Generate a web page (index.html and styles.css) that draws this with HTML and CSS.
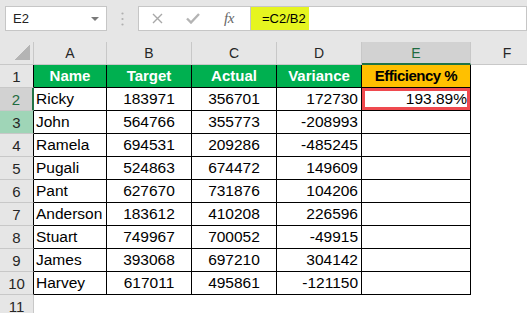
FILE: index.html
```html
<!DOCTYPE html>
<html lang="en">
<head>
  <meta charset="UTF-8" />
  <title>Efficiency %</title>
  <link rel="stylesheet" href="styles.css">
</head>
<body>
  <div class="toolbar">
    <div class="namebox">
      <span>E2</span>
      <span class="caret"></span>
    </div>
    <div class="dots">
      <svg width="3" height="14" viewBox="0 0 3 14"><circle cx="1.5" cy="1.5" r="1.1"/><circle cx="1.5" cy="7" r="1.1"/><circle cx="1.5" cy="12.5" r="1.1"/></svg>
    </div>
    <div class="fbtns">
      <span class="slot">
        <svg width="11" height="11" viewBox="0 0 11 11"><path d="M1 1 L10 10 M10 1 L1 10" class="cancel"/></svg>
      </span>
      <span class="slot">
        <svg width="14" height="11" viewBox="0 0 14 11"><path d="M1 5.5 L5 9.5 L13 1" class="enter"/></svg>
      </span>
      <span class="slot fx">fx</span>
    </div>
    <div class="formula">
      <span class="hl">=C2/B2</span>
    </div>
  </div>

  <table class="sheet">
    <colgroup>
      <col class="c-head">
      <col class="c-a">
      <col class="c-num">
      <col class="c-num">
      <col class="c-num">
      <col class="c-e">
      <col class="c-f">
    </colgroup>
    <tr class="cols">
      <th class="corner"></th>
      <th>A</th><th>B</th><th>C</th><th>D</th><th class="sel">E</th><th class="last">F</th>
    </tr>
    <tr class="titles">
      <th class="rh">1</th>
      <td class="t-green">Name</td>
      <td class="t-green">Target</td>
      <td class="t-green">Actual</td>
      <td class="t-green">Variance</td>
      <td class="t-yellow">Efficiency %</td>
      <td class="blank"></td>
    </tr>
    <tr>
      <th class="rh rh-sel">2</th>
      <td class="name">Ricky</td><td class="mid">183971</td><td class="mid">356701</td><td class="right">172730</td><td class="right active">193.89%</td><td class="blank"></td>
    </tr>
    <tr>
      <th class="rh rh-hi">3</th>
      <td class="name">John</td><td class="mid">564766</td><td class="mid">355773</td><td class="right">-208993</td><td></td><td class="blank"></td>
    </tr>
    <tr>
      <th class="rh">4</th>
      <td class="name">Ramela</td><td class="mid">694531</td><td class="mid">209286</td><td class="right">-485245</td><td></td><td class="blank"></td>
    </tr>
    <tr>
      <th class="rh">5</th>
      <td class="name">Pugali</td><td class="mid">524863</td><td class="mid">674472</td><td class="right">149609</td><td></td><td class="blank"></td>
    </tr>
    <tr>
      <th class="rh">6</th>
      <td class="name">Pant</td><td class="mid">627670</td><td class="mid">731876</td><td class="right">104206</td><td></td><td class="blank"></td>
    </tr>
    <tr>
      <th class="rh">7</th>
      <td class="name">Anderson</td><td class="mid">183612</td><td class="mid">410208</td><td class="right">226596</td><td></td><td class="blank"></td>
    </tr>
    <tr>
      <th class="rh">8</th>
      <td class="name">Stuart</td><td class="mid">749967</td><td class="mid">700052</td><td class="right">-49915</td><td></td><td class="blank"></td>
    </tr>
    <tr>
      <th class="rh">9</th>
      <td class="name">James</td><td class="mid">393068</td><td class="mid">697210</td><td class="right">304142</td><td></td><td class="blank"></td>
    </tr>
    <tr>
      <th class="rh">10</th>
      <td class="name">Harvey</td><td class="mid">617011</td><td class="mid">495861</td><td class="right">-121150</td><td></td><td class="blank"></td>
    </tr>
    <tr class="empty">
      <th class="rh rh-out">11</th>
      <td></td><td></td><td></td><td></td><td></td><td></td>
    </tr>
  </table>
</body>
</html>
```

FILE: styles.css
```css
body {
  margin: 0;
  background: #fff;
  color: #000;
  font-family: "Liberation Sans", Arial, sans-serif;
  font-size: 15.5px;
  overflow: hidden;
}

/* name box + formula bar */
.toolbar {
  display: flex;
  align-items: flex-start;
  height: 42px;
  box-sizing: border-box;
  padding: 6px 0 0 5px;
  background: #e6e6e6;
}

.namebox {
  width: 102px;
  height: 25px;
  box-sizing: border-box;
  border: 1px solid #c6c6c6;
  background: #fff;
  display: flex;
  align-items: center;
  justify-content: space-between;
  padding: 0 7px 0 7px;
  font-size: 13px;
  color: #222;
}

.caret {
  width: 0;
  height: 0;
  border-left: 4px solid transparent;
  border-right: 4px solid transparent;
  border-top: 4px solid #7a7a7a;
}

.dots {
  width: 31px;
  height: 25px;
  display: flex;
  align-items: center;
  justify-content: center;
}

.dots svg { fill: #b0b0b0; }

.fbtns {
  width: 113px;
  height: 25px;
  box-sizing: border-box;
  border: 1px solid #c6c6c6;
  background: #fff;
  display: flex;
  align-items: center;
}

.slot {
  width: 36px;
  display: flex;
  align-items: center;
  justify-content: center;
}

.cancel {
  stroke: #a8a8a8;
  stroke-width: 1.4;
  fill: none;
}

.enter {
  stroke: #b4b4b4;
  stroke-width: 2.4;
  fill: none;
}

.fx {
  font-family: "Liberation Serif", serif;
  font-style: italic;
  font-size: 15px;
  color: #666;
  letter-spacing: -0.5px;
}

.formula {
  flex: 1;
  height: 25px;
  box-sizing: border-box;
  border: 1px solid #c6c6c6;
  border-left: none;
  background: #fff;
  display: flex;
}

.hl {
  background: #e6f520;
  width: 58px;
  box-sizing: border-box;
  padding-left: 11px;
  font-size: 13px;
  line-height: 23px;
}

/* grid */
.sheet {
  table-layout: fixed;
  width: 543px;
  border-collapse: separate;
  border-spacing: 0;
}

.c-head { width: 34px; }
.c-a { width: 73px; }
.c-num { width: 85px; }
.c-e { width: 109px; }
.c-f { width: 72px; }

.sheet th,
.sheet td {
  padding: 0;
  box-sizing: border-box;
  white-space: nowrap;
  overflow: hidden;
}

.cols { height: 22px; }

.cols th {
  background: #e6e6e6;
  font-weight: normal;
  font-size: 14px;
  color: #262626;
  border-right: 1px solid #c8c8c8;
  border-bottom: 1px solid #c8c8c8;
}

.cols th.last { border-right: none; }

.cols th.sel {
  background: #d2d2d2;
  color: #1e6b40;
  border-bottom: 2px solid #217346;
}

.corner {
  background: linear-gradient(to bottom right, transparent 50%, #b4b4b4 50%) no-repeat right 3px bottom 4px / 15px 15px, #e6e6e6 !important;
}

.sheet tr { height: 23px; }

.rh {
  background: #e6e6e6;
  font-weight: normal;
  font-size: 15px;
  color: #262626;
  text-align: center;
  border-right: 1px solid #000;
  border-bottom: 1px solid #c8c8c8;
}

.rh-sel {
  background: #d2d2d2;
  color: #1e6b40;
  border-right: 2px solid #217346;
}

.rh-hi { background: #9fd5b7; }

.rh-out { border-right: 1px solid #c8c8c8; }

.sheet td {
  border-right: 1px solid #000;
  border-bottom: 1px solid #000;
  line-height: 22px;
}

.sheet td.blank,
.empty td {
  border: none;
}

.t-green {
  background: #00b050;
  color: #fff;
  font-weight: bold;
  font-size: 15px;
  text-align: center;
}

.t-yellow {
  background: #ffc000;
  color: #000;
  font-weight: bold;
  font-size: 15px;
  text-align: center;
  letter-spacing: -0.5px;
}

.name { padding-left: 2px !important; }
.mid { text-align: center; }
.right { text-align: right; padding-right: 3px !important; }

.active {
  box-shadow: inset 0 0 0 3px #ef4a4f;
}
```
